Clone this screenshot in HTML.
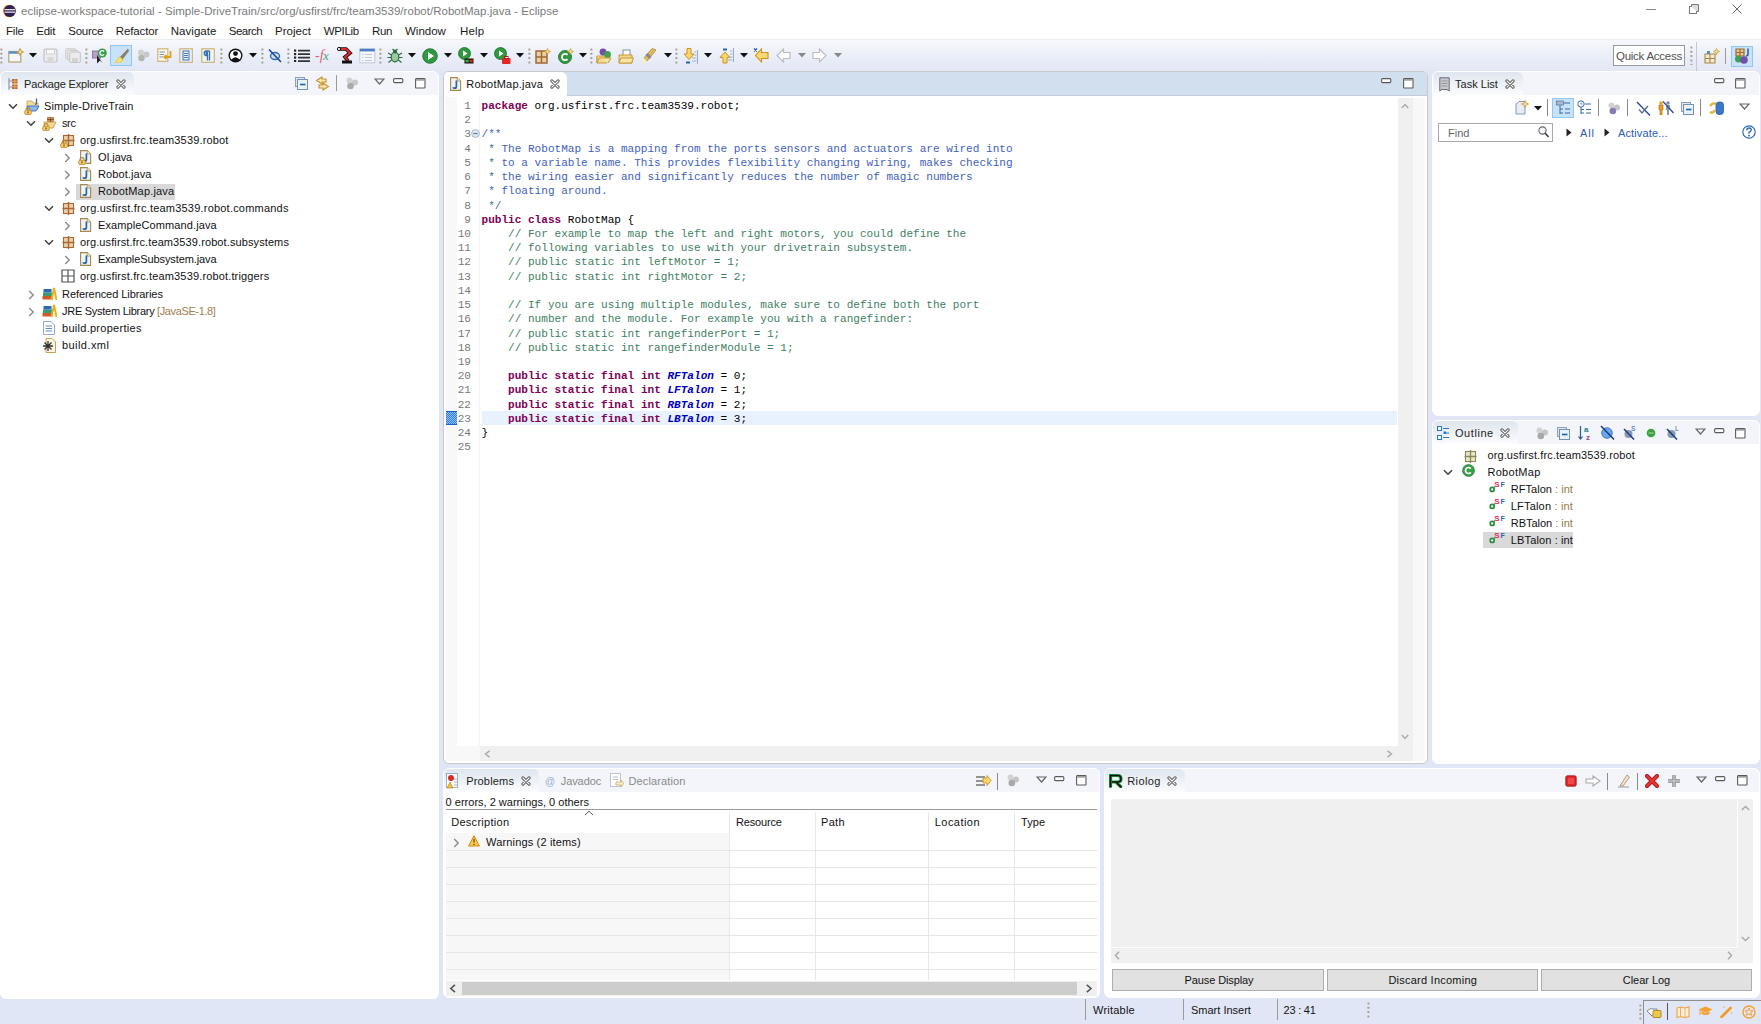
<!DOCTYPE html>
<html><head><meta charset="utf-8"><style>
*{margin:0;padding:0;box-sizing:border-box}
html,body{width:1761px;height:1024px;overflow:hidden}
body{position:relative;background:#E1E6F6;font-family:"Liberation Sans",sans-serif;font-size:11px;color:#000}
.a{position:absolute}
.t{position:absolute;white-space:pre;line-height:1}
.m{position:absolute;white-space:pre;line-height:1;font-family:"Liberation Mono",monospace}
</style></head><body>
<div class="a" style="left:0px;top:0px;width:1761px;height:40px;background:#fff"></div>
<svg class="a" style="left:2px;top:4px" width="15" height="14" viewBox="0 0 15 14"><circle cx="7.3" cy="7" r="6.3" fill="#f7941e"/><circle cx="7.8" cy="7" r="6" fill="#2c2255"/><rect x="2.5" y="5" width="10.5" height="1.3" fill="#e6e0f0"/><rect x="2.5" y="7.5" width="10.5" height="1.3" fill="#e6e0f0"/></svg>
<div class="t" style="left:21px;top:6.00px;font-size:11.5px;color:#7a7a7a;letter-spacing:0.028px;">eclipse-workspace-tutorial - Simple-DriveTrain/src/org/usfirst/frc/team3539/robot/RobotMap.java - Eclipse</div>
<div class="a" style="left:1646px;top:9px;width:10px;height:1.4px;background:#8a8a8a"></div>
<svg class="a" style="left:1689px;top:4px" width="10" height="10" viewBox="0 0 10 10"><rect x="0.5" y="2.5" width="7" height="7" fill="none" stroke="#777"/><path d="M2.5 2.5 V0.5 H9.5 V7.5 H7.5" fill="#ddd" stroke="#777"/></svg>
<svg class="a" style="left:1732px;top:4px" width="10" height="10" viewBox="0 0 10 10"><path d="M0.5 0.5 L9.5 9.5 M9.5 0.5 L0.5 9.5" stroke="#666" stroke-width="1"/></svg>
<div class="t" style="left:6px;top:26.00px;font-size:11.5px;color:#1a1a1a;letter-spacing:-0.210px;">File</div>
<div class="t" style="left:36.25px;top:26.00px;font-size:11.5px;color:#1a1a1a;letter-spacing:-0.222px;">Edit</div>
<div class="t" style="left:68.25px;top:26.00px;font-size:11.5px;color:#1a1a1a;letter-spacing:-0.258px;">Source</div>
<div class="t" style="left:115.75px;top:26.00px;font-size:11.5px;color:#1a1a1a;letter-spacing:-0.116px;">Refactor</div>
<div class="t" style="left:170.75px;top:26.00px;font-size:11.5px;color:#1a1a1a;letter-spacing:0.037px;">Navigate</div>
<div class="t" style="left:228.75px;top:26.00px;font-size:11.5px;color:#1a1a1a;letter-spacing:-0.508px;">Search</div>
<div class="t" style="left:275px;top:26.00px;font-size:11.5px;color:#1a1a1a;letter-spacing:0.018px;">Project</div>
<div class="t" style="left:323.75px;top:26.00px;font-size:11.5px;color:#1a1a1a;letter-spacing:-0.333px;">WPILib</div>
<div class="t" style="left:372px;top:26.00px;font-size:11.5px;color:#1a1a1a;letter-spacing:-0.349px;">Run</div>
<div class="t" style="left:405px;top:26.00px;font-size:11.5px;color:#1a1a1a;">Window</div>
<div class="t" style="left:460px;top:26.00px;font-size:11.5px;color:#1a1a1a;letter-spacing:0.166px;">Help</div>
<div class="a" style="left:0px;top:39px;width:1761px;height:1px;background:#ececec"></div>
<div class="a" style="left:0px;top:40px;width:1761px;height:31px;background:linear-gradient(#f7f8fc,#e9edf8 60%,#e3e7f5)"></div>
<svg class="a" style="left:0px;top:47px" width="3" height="17" viewBox="0 0 3 17"><rect x="0.4" y="1.5" width="2" height="2" rx="0.5" fill="#a8a090"/><rect x="0.4" y="5.8" width="2" height="2" rx="0.5" fill="#a8a090"/><rect x="0.4" y="10.1" width="2" height="2" rx="0.5" fill="#a8a090"/><rect x="0.4" y="14.4" width="2" height="2" rx="0.5" fill="#a8a090"/></svg>
<svg class="a" style="left:8px;top:48px" width="16" height="15" viewBox="0 0 16 15"><rect x="0.8" y="3.5" width="12" height="10.5" fill="#f4f8fc" stroke="#b9a070" stroke-width="1.2"/><rect x="1" y="3.5" width="11.5" height="2.2" fill="#4a8fd0"/><path d="M12 0.5 L13 3 L15.5 4 L13 5 L12 7.5 L11 5 L8.5 4 L11 3Z" fill="#f8e08a" stroke="#c09030" stroke-width="0.8"/></svg>
<svg class="a" style="left:29px;top:53px" width="8" height="5" viewBox="0 0 8 5"><path d="M0 0 H8 L4 4.5Z" fill="#111"/></svg>
<svg class="a" style="left:43px;top:48px" width="15" height="15" viewBox="0 0 15 15"><rect x="1" y="1" width="13" height="13" rx="1.5" fill="#ececec" stroke="#c4c4c4" stroke-width="1.2"/><rect x="3.5" y="1.5" width="8" height="4.5" fill="#fafafa" stroke="#c8c8c8" stroke-width="0.8"/><rect x="4.5" y="9" width="6" height="5" fill="#d8d8d8"/></svg>
<svg class="a" style="left:65px;top:48px" width="16" height="15" viewBox="0 0 16 15"><rect x="0.8" y="0.8" width="10" height="10" rx="1" fill="#eee" stroke="#c8c8c8"/><rect x="2.8" y="2.4" width="10" height="10" rx="1" fill="#eee" stroke="#c8c8c8"/><rect x="4.8" y="4" width="10.5" height="10.5" rx="1" fill="#ececec" stroke="#c4c4c4"/><rect x="7" y="10" width="6" height="4" fill="#d4d4d4"/></svg>
<svg class="a" style="left:85px;top:47px" width="3" height="17" viewBox="0 0 3 17"><rect x="0.4" y="1.5" width="2" height="2" rx="0.5" fill="#a8a090"/><rect x="0.4" y="5.8" width="2" height="2" rx="0.5" fill="#a8a090"/><rect x="0.4" y="10.1" width="2" height="2" rx="0.5" fill="#a8a090"/><rect x="0.4" y="14.4" width="2" height="2" rx="0.5" fill="#a8a090"/></svg>
<svg class="a" style="left:92px;top:48px" width="15" height="16" viewBox="0 0 15 16"><rect x="0.5" y="3" width="8" height="7" fill="#b8a0c8" stroke="#7a6890" stroke-width="0.8"/><path d="M5 7 V15.5 L8 12.5 L10.5 15 Z" fill="#222"/><circle cx="10.2" cy="5" r="4.6" fill="#3aa04a"/><path d="M12 3.6 A2.3 2.3 0 1 0 12 6.4" fill="none" stroke="#fff" stroke-width="1.3"/></svg>
<div class="a" style="left:110px;top:45px;width:22px;height:21px;background:#c8e2f8;border:1px solid #92c6f4"></div>
<svg class="a" style="left:114px;top:48px" width="15" height="15" viewBox="0 0 15 15"><path d="M14 0.5 L6 9 L8.5 11.5 L15 3Z" fill="#8a8070"/><path d="M5.5 8.5 L9 12 L6 15 L1 15 Z" fill="#f5e070" stroke="#d8b830" stroke-width="0.6"/></svg>
<svg class="a" style="left:137px;top:49px" width="13" height="13" viewBox="0 0 13 13"><circle cx="4" cy="3.5" r="3" fill="#cfcfcf"/><circle cx="9.5" cy="5.5" r="3" fill="#c8c8c8"/><circle cx="4.5" cy="9" r="3.2" fill="#b4b4b4"/></svg>
<svg class="a" style="left:157px;top:48px" width="16" height="15" viewBox="0 0 16 15"><rect x="0.8" y="0.8" width="10" height="12.5" fill="#fbf6e6" stroke="#c8b070" stroke-width="1.1"/><path d="M2.5 4 H8 M2.5 6.5 H7 M2.5 9 H6" stroke="#6a8ab0" stroke-width="0.9"/><path d="M13.5 3 V9 H7.5 M9.5 7 L7.3 9 L9.5 11" fill="none" stroke="#e0a020" stroke-width="1.8"/></svg>
<svg class="a" style="left:179px;top:48px" width="14" height="15" viewBox="0 0 14 15"><rect x="0.8" y="0.8" width="12.5" height="13.5" fill="#eef2f8" stroke="#c8b070" stroke-width="1.1"/><rect x="4" y="3" width="6" height="9" fill="none" stroke="#3a70c0" stroke-width="1"/><path d="M5 5.5 H9 M5 7.5 H9 M5 9.5 H9" stroke="#3a70c0" stroke-width="0.9"/></svg>
<svg class="a" style="left:201px;top:48px" width="14" height="15" viewBox="0 0 14 15"><rect x="0.8" y="0.8" width="12.5" height="13.5" fill="#f4f4ec" stroke="#c8b070" stroke-width="1.1"/><path d="M8.5 3 H5.5 A2.3 2.3 0 0 0 5.5 7.6 H6.5 V12.5 M8.5 3 V12.5" fill="none" stroke="#2f6fb8" stroke-width="1.3"/><path d="M4.5 3.5 h2.5 v3.5 h-2.5z" fill="#2f6fb8"/></svg>
<svg class="a" style="left:220px;top:47px" width="3" height="17" viewBox="0 0 3 17"><rect x="0.4" y="1.5" width="2" height="2" rx="0.5" fill="#a8a090"/><rect x="0.4" y="5.8" width="2" height="2" rx="0.5" fill="#a8a090"/><rect x="0.4" y="10.1" width="2" height="2" rx="0.5" fill="#a8a090"/><rect x="0.4" y="14.4" width="2" height="2" rx="0.5" fill="#a8a090"/></svg>
<svg class="a" style="left:228px;top:48px" width="15" height="15" viewBox="0 0 15 15"><circle cx="7.5" cy="7.5" r="7" fill="#111"/><circle cx="7.5" cy="7.5" r="5.6" fill="#fff"/><circle cx="7.5" cy="5.6" r="2.4" fill="#111"/><path d="M3 12 Q7.5 6.5 12 12 Q7.5 15 3 12Z" fill="#111"/></svg>
<svg class="a" style="left:249px;top:53px" width="8" height="5" viewBox="0 0 8 5"><path d="M0 0 H8 L4 4.5Z" fill="#111"/></svg>
<svg class="a" style="left:261px;top:47px" width="3" height="17" viewBox="0 0 3 17"><rect x="0.4" y="1.5" width="2" height="2" rx="0.5" fill="#a8a090"/><rect x="0.4" y="5.8" width="2" height="2" rx="0.5" fill="#a8a090"/><rect x="0.4" y="10.1" width="2" height="2" rx="0.5" fill="#a8a090"/><rect x="0.4" y="14.4" width="2" height="2" rx="0.5" fill="#a8a090"/></svg>
<svg class="a" style="left:268px;top:48px" width="14" height="15" viewBox="0 0 14 15"><ellipse cx="7" cy="8" rx="4.5" ry="3.5" fill="#cfe0f4" stroke="#3a68b0" stroke-width="1.4"/><path d="M1 1.5 L13 14" stroke="#1a4aa0" stroke-width="1.6"/></svg>
<svg class="a" style="left:287px;top:47px" width="3" height="17" viewBox="0 0 3 17"><rect x="0.4" y="1.5" width="2" height="2" rx="0.5" fill="#a8a090"/><rect x="0.4" y="5.8" width="2" height="2" rx="0.5" fill="#a8a090"/><rect x="0.4" y="10.1" width="2" height="2" rx="0.5" fill="#a8a090"/><rect x="0.4" y="14.4" width="2" height="2" rx="0.5" fill="#a8a090"/></svg>
<svg class="a" style="left:294px;top:49px" width="16" height="13" viewBox="0 0 16 13"><rect x="0" y="0.5" width="2.2" height="2.2" fill="#222"/><rect x="0" y="4" width="2.2" height="2.2" fill="#222"/><rect x="0" y="7.5" width="2.2" height="2.2" fill="#222"/><rect x="0" y="11" width="2.2" height="2.2" fill="#222"/><path d="M4 1.6 H16 M4 5.1 H16 M4 8.6 H16 M4 12.1 H16" stroke="#333" stroke-width="1.6"/></svg>
<svg class="a" style="left:315px;top:48px" width="16" height="15" viewBox="0 0 16 15"><text x="0" y="12" font-family="Liberation Serif" font-style="italic" font-size="14" fill="#e06080">-f</text><text x="8" y="12" font-family="Liberation Serif" font-style="italic" font-size="13" fill="#50a070">x</text></svg>
<svg class="a" style="left:337px;top:47px" width="16" height="17" viewBox="0 0 16 17"><path d="M1 2 H9 L13 6 L8 10 L11 14" fill="none" stroke="#111" stroke-width="3.6"/><path d="M1 2 H9 L13 6 L8 10 L11 14" fill="none" stroke="#e02828" stroke-width="2"/><rect x="5" y="13.5" width="10" height="3" fill="#111"/><circle cx="2" cy="2" r="1.6" fill="#fff" stroke="#111"/></svg>
<svg class="a" style="left:359px;top:48px" width="17" height="16" viewBox="0 0 17 16"><rect x="0.8" y="0.8" width="15" height="14" fill="#f6f8fb" stroke="#c0c8d8" stroke-width="1"/><rect x="0.8" y="0.8" width="15" height="2.6" fill="#4a80c8"/><path d="M3 6.5 H4.5 M6 6.5 H13 M3 9.5 H4.5 M6 9.5 H13 M3 12.5 H4.5 M6 12.5 H13" stroke="#c0c8d4" stroke-width="1"/></svg>
<svg class="a" style="left:379px;top:47px" width="3" height="17" viewBox="0 0 3 17"><rect x="0.4" y="1.5" width="2" height="2" rx="0.5" fill="#a8a090"/><rect x="0.4" y="5.8" width="2" height="2" rx="0.5" fill="#a8a090"/><rect x="0.4" y="10.1" width="2" height="2" rx="0.5" fill="#a8a090"/><rect x="0.4" y="14.4" width="2" height="2" rx="0.5" fill="#a8a090"/></svg>
<svg class="a" style="left:387px;top:48px" width="16" height="16" viewBox="0 0 16 16"><ellipse cx="8" cy="9" rx="3.8" ry="4.8" fill="#9cc8a0" stroke="#2a6a40" stroke-width="1.2"/><circle cx="8" cy="3.5" r="2" fill="#2a6a40"/><path d="M1 5 L4.5 7 M15 5 L11.5 7 M0.5 9.5 H4 M15.5 9.5 H12 M1.5 14.5 L4.5 12 M14.5 14.5 L11.5 12 M5.5 1 L7 2.5 M10.5 1 L9 2.5" stroke="#2a6a40" stroke-width="1.1"/></svg>
<svg class="a" style="left:408px;top:53px" width="8" height="5" viewBox="0 0 8 5"><path d="M0 0 H8 L4 4.5Z" fill="#111"/></svg>
<svg class="a" style="left:422px;top:48px" width="16" height="16" viewBox="0 0 16 16"><circle cx="8" cy="8" r="7.3" fill="#2d9a3e" stroke="#1b6b2a" stroke-width="0.8"/><path d="M6 4 L12 8 L6 12Z" fill="#fff"/></svg>
<svg class="a" style="left:444px;top:53px" width="8" height="5" viewBox="0 0 8 5"><path d="M0 0 H8 L4 4.5Z" fill="#111"/></svg>
<svg class="a" style="left:458px;top:47px" width="16" height="17" viewBox="0 0 16 17"><circle cx="6.5" cy="6.5" r="6" fill="#2d9a3e" stroke="#1b6b2a" stroke-width="0.8"/><path d="M5 3.5 L9.5 6.5 L5 9.5Z" fill="#fff"/><rect x="6.5" y="11.5" width="9" height="5" fill="#111"/><rect x="7.5" y="12.7" width="3.2" height="2.6" fill="#20c040"/><rect x="11.5" y="12.7" width="3.2" height="2.6" fill="#e02020"/></svg>
<svg class="a" style="left:480px;top:53px" width="8" height="5" viewBox="0 0 8 5"><path d="M0 0 H8 L4 4.5Z" fill="#111"/></svg>
<svg class="a" style="left:494px;top:47px" width="17" height="17" viewBox="0 0 17 17"><circle cx="6.5" cy="6.5" r="6" fill="#2d9a3e" stroke="#1b6b2a" stroke-width="0.8"/><path d="M5 3.5 L9.5 6.5 L5 9.5Z" fill="#fff"/><rect x="8" y="11" width="8.5" height="6" rx="1" fill="#e02828"/><rect x="10.5" y="9.5" width="3.5" height="2" fill="none" stroke="#b01818" stroke-width="1"/></svg>
<svg class="a" style="left:516px;top:53px" width="8" height="5" viewBox="0 0 8 5"><path d="M0 0 H8 L4 4.5Z" fill="#111"/></svg>
<svg class="a" style="left:528px;top:47px" width="3" height="17" viewBox="0 0 3 17"><rect x="0.4" y="1.5" width="2" height="2" rx="0.5" fill="#a8a090"/><rect x="0.4" y="5.8" width="2" height="2" rx="0.5" fill="#a8a090"/><rect x="0.4" y="10.1" width="2" height="2" rx="0.5" fill="#a8a090"/><rect x="0.4" y="14.4" width="2" height="2" rx="0.5" fill="#a8a090"/></svg>
<svg class="a" style="left:535px;top:48px" width="16" height="16" viewBox="0 0 16 16"><rect x="1" y="3" width="11" height="12" fill="#e8d0a0"/><path d="M1 9 H12 M6.5 3 V15 M1 3 H12 V15 H1Z" stroke="#a06838" stroke-width="1.5" fill="none"/><path d="M12.5 0.5 L13.4 2.6 L15.5 3.5 L13.4 4.4 L12.5 6.5 L11.6 4.4 L9.5 3.5 L11.6 2.6Z" fill="#f8e08a" stroke="#c09030" stroke-width="0.7"/></svg>
<svg class="a" style="left:558px;top:48px" width="16" height="16" viewBox="0 0 16 16"><circle cx="7" cy="9" r="6.5" fill="#2d9a3e" stroke="#1b6b2a" stroke-width="0.8"/><path d="M9.5 6.8 A3.2 3.2 0 1 0 9.5 11.2" fill="none" stroke="#fff" stroke-width="1.8"/><path d="M12.5 0.5 L13.4 2.6 L15.5 3.5 L13.4 4.4 L12.5 6.5 L11.6 4.4 L9.5 3.5 L11.6 2.6Z" fill="#f8e08a" stroke="#c09030" stroke-width="0.7"/></svg>
<svg class="a" style="left:579px;top:53px" width="8" height="5" viewBox="0 0 8 5"><path d="M0 0 H8 L4 4.5Z" fill="#111"/></svg>
<svg class="a" style="left:590px;top:47px" width="3" height="17" viewBox="0 0 3 17"><rect x="0.4" y="1.5" width="2" height="2" rx="0.5" fill="#a8a090"/><rect x="0.4" y="5.8" width="2" height="2" rx="0.5" fill="#a8a090"/><rect x="0.4" y="10.1" width="2" height="2" rx="0.5" fill="#a8a090"/><rect x="0.4" y="14.4" width="2" height="2" rx="0.5" fill="#a8a090"/></svg>
<svg class="a" style="left:596px;top:47px" width="17" height="17" viewBox="0 0 17 17"><path d="M1 9 H14 L11 16 H1Z" fill="#f4d890" stroke="#c89838" stroke-width="1"/><circle cx="7" cy="5" r="3.4" fill="#7050a8"/><circle cx="11.5" cy="7.5" r="3.4" fill="#40a050"/><path d="M1 9 V16 L3 11 H15 L12 16" fill="#f8e4a8" stroke="#c89838" stroke-width="1"/></svg>
<svg class="a" style="left:618px;top:48px" width="16" height="16" viewBox="0 0 16 16"><rect x="5" y="2" width="7" height="6" fill="#fff" stroke="#7a90b0" stroke-width="1"/><path d="M1 7 H14 V15 H1Z" fill="#f4d890" stroke="#c89838" stroke-width="1"/><path d="M1 15 L3 10 H15.5 L13.5 15Z" fill="#f8e4a8" stroke="#c89838" stroke-width="1"/></svg>
<svg class="a" style="left:641px;top:48px" width="17" height="16" viewBox="0 0 17 16"><path d="M15 2 L11 0.5 L3 10 L6 13 Z" fill="#e0b860" stroke="#b08830" stroke-width="0.8"/><path d="M5.5 6 L9.5 10" stroke="#888" stroke-width="3"/><path d="M1 15.5 L3 10 L6 13Z" fill="#f8f0b0"/></svg>
<svg class="a" style="left:664px;top:53px" width="8" height="5" viewBox="0 0 8 5"><path d="M0 0 H8 L4 4.5Z" fill="#111"/></svg>
<svg class="a" style="left:675px;top:47px" width="3" height="17" viewBox="0 0 3 17"><rect x="0.4" y="1.5" width="2" height="2" rx="0.5" fill="#a8a090"/><rect x="0.4" y="5.8" width="2" height="2" rx="0.5" fill="#a8a090"/><rect x="0.4" y="10.1" width="2" height="2" rx="0.5" fill="#a8a090"/><rect x="0.4" y="14.4" width="2" height="2" rx="0.5" fill="#a8a090"/></svg>
<svg class="a" style="left:683px;top:48px" width="15" height="16" viewBox="0 0 15 16"><path d="M4 0.5 H8 V6 H11 L6 11.5 L1 6 H4Z" fill="#f8d870" stroke="#d09020" stroke-width="1"/><path d="M11 4 H13.5 M11 7 H13.5 M9 10 H13.5 M9 13 H13.5" stroke="#9aaccc" stroke-width="0.9"/><path d="M14.5 2 V16" stroke="#9aaccc" stroke-width="1"/><rect x="3" y="13.5" width="4" height="2" fill="#3060b0"/></svg>
<svg class="a" style="left:704px;top:53px" width="8" height="5" viewBox="0 0 8 5"><path d="M0 0 H8 L4 4.5Z" fill="#111"/></svg>
<svg class="a" style="left:719px;top:47px" width="15" height="17" viewBox="0 0 15 17"><path d="M4 16 H8 V10.5 H11 L6 5 L1 10.5 H4Z" fill="#f8d870" stroke="#d09020" stroke-width="1"/><path d="M11 4 H13.5 M11 7 H13.5 M9 10 H13.5 M9 13 H13.5" stroke="#9aaccc" stroke-width="0.9"/><path d="M14.5 1 V15" stroke="#9aaccc" stroke-width="1"/><rect x="4" y="1.5" width="4" height="2" fill="#3060b0"/></svg>
<svg class="a" style="left:740px;top:53px" width="8" height="5" viewBox="0 0 8 5"><path d="M0 0 H8 L4 4.5Z" fill="#111"/></svg>
<svg class="a" style="left:753px;top:48px" width="16" height="15" viewBox="0 0 16 15"><path d="M15 4.5 V10.5 H8.5 V14 L2.5 7.5 L8.5 1 V4.5Z" fill="#f8d870" stroke="#d09020" stroke-width="1.1"/><path d="M1 0.5 L4 3.5 M4 0.5 L1 3.5" stroke="#2050a0" stroke-width="1.1"/></svg>
<svg class="a" style="left:776px;top:48px" width="15" height="15" viewBox="0 0 15 15"><path d="M14 4.5 V10.5 H7.5 V14 L1 7.5 L7.5 1 V4.5Z" fill="#fff" stroke="#bdbdbd" stroke-width="1.2"/></svg>
<svg class="a" style="left:798px;top:53px" width="8" height="5" viewBox="0 0 8 5"><path d="M0 0 H8 L4 4.5Z" fill="#888"/></svg>
<svg class="a" style="left:812px;top:48px" width="15" height="15" viewBox="0 0 15 15"><path d="M1 4.5 V10.5 H7.5 V14 L14 7.5 L7.5 1 V4.5Z" fill="#fff" stroke="#bdbdbd" stroke-width="1.2"/></svg>
<svg class="a" style="left:834px;top:53px" width="8" height="5" viewBox="0 0 8 5"><path d="M0 0 H8 L4 4.5Z" fill="#888"/></svg>
<div class="a" style="left:1613px;top:45px;width:72px;height:21px;background:#fff;border:1px solid #9a9a9a"></div>
<div class="t" style="left:1616px;top:51.00px;font-size:11.5px;color:#505050;letter-spacing:-0.261px;">Quick Access</div>
<svg class="a" style="left:1690px;top:45px" width="3" height="20" viewBox="0 0 3 20"><rect x="0.4" y="1.5" width="2" height="2" rx="0.5" fill="#a8a090"/><rect x="0.4" y="5.8" width="2" height="2" rx="0.5" fill="#a8a090"/><rect x="0.4" y="10.1" width="2" height="2" rx="0.5" fill="#a8a090"/><rect x="0.4" y="14.4" width="2" height="2" rx="0.5" fill="#a8a090"/><rect x="0.4" y="18.7" width="2" height="2" rx="0.5" fill="#a8a090"/></svg>
<div class="a" style="left:1696px;top:42px;width:1px;height:29px;background:#c4c8d4"></div>
<svg class="a" style="left:1704px;top:48px" width="16" height="16" viewBox="0 0 16 16"><rect x="1" y="6" width="10" height="9" fill="#f4ead0"/><path d="M1 10.5 H11 M6 6 V15 M1 6 H11 V15 H1Z" stroke="#a8884a" stroke-width="1.1" fill="none"/><rect x="3" y="3" width="3" height="3" fill="#5a8ad0"/><path d="M12.5 0.5 L13.4 2.6 L15.5 3.5 L13.4 4.4 L12.5 6.5 L11.6 4.4 L9.5 3.5 L11.6 2.6Z" fill="#f8e08a" stroke="#c09030" stroke-width="0.7"/></svg>
<div class="a" style="left:1725px;top:48px;width:1px;height:16px;background:#999"></div>
<div class="a" style="left:1731px;top:46px;width:22px;height:21px;background:#c8e2f8;border:1px solid #92c6f4"></div>
<svg class="a" style="left:1734px;top:48px" width="17" height="16" viewBox="0 0 17 16"><rect x="2" y="1" width="8" height="7" fill="#e6c890"/><path d="M2 4.5 H10 M6 1 V8 M2 1 H10 V8 H2Z" stroke="#a06838" stroke-width="1.2" fill="none"/><circle cx="4.5" cy="11" r="3.5" fill="#40a050"/><circle cx="10" cy="12" r="3.8" fill="#7050a8"/><path d="M14 0.5 V6 Q14 8 12 8" fill="none" stroke="#2a5aa8" stroke-width="1.5"/></svg>
<div class="a" style="left:0px;top:71px;width:439px;height:928px;background:#fff;border:1px solid #ffffff;border-radius:6px;overflow:hidden"><div class="a" style="left:0;top:0;width:437px;height:23px;background:#f3f5fa;border-bottom:1px solid #f3f5fa"></div><div class="a" style="left:0;top:0;width:133px;height:23px;background:linear-gradient(#dfe6ef,#fbfcfd);border-top-right-radius:6px"></div></div>
<svg class="a" style="left:8px;top:78px" width="10" height="12" viewBox="0 0 10 12"><path d="M1 0 V12 M1 3 H4 M1 9 H4" stroke="#8898b0" stroke-width="1.2"/><rect x="4" y="1" width="5.5" height="4.5" fill="#c06a28"/><rect x="4" y="6.5" width="5.5" height="4.5" fill="#c06a28"/><path d="M4 3.2 H9.5 M6.8 1 V5.5 M4 8.7 H9.5 M6.8 6.5 V11" stroke="#f0d0a0" stroke-width="0.6"/></svg>
<div class="t" style="left:24px;top:79.00px;font-size:11px;color:#222;letter-spacing:-0.162px;">Package Explorer</div>
<svg class="a" style="left:116px;top:79px" width="10" height="10" viewBox="0 0 10 10"><path d="M1.9 1.9 L8.1 8.1 M8.1 1.9 L1.9 8.1" stroke="#555" stroke-width="3" stroke-linecap="round"/><path d="M1.9 1.9 L8.1 8.1 M8.1 1.9 L1.9 8.1" stroke="#fff" stroke-width="1.3" stroke-linecap="round"/></svg>
<svg class="a" style="left:295px;top:77px" width="13" height="13" viewBox="0 0 13 13"><rect x="0.5" y="0.5" width="9" height="9" fill="#dfe8f0" stroke="#8ca0b8"/><rect x="2.5" y="2.5" width="10" height="10" fill="#e8f2f8" stroke="#7890b0"/><path d="M5 7.5 H10.5" stroke="#2060a8" stroke-width="1.6"/></svg>
<svg class="a" style="left:315px;top:76px" width="15" height="15" viewBox="0 0 15 15"><path d="M7 1 L1.5 4.5 L7 8 V6 H11 V3 H7Z" fill="#f8e8b0" stroke="#c89030" stroke-width="1.1"/><path d="M8 7 L13.5 10.5 L8 14 V12 H4 V9 H8Z" fill="#f8e8b0" stroke="#c89030" stroke-width="1.1"/></svg>
<div class="a" style="left:336px;top:75px;width:1px;height:16px;background:#999"></div>
<svg class="a" style="left:346px;top:77px" width="13" height="13" viewBox="0 0 13 13"><circle cx="3.5" cy="3.5" r="3" fill="#d2d2d2"/><circle cx="9" cy="5.5" r="3" fill="#c8c8c8"/><circle cx="4.5" cy="9" r="3.3" fill="#aaa"/></svg>
<svg class="a" style="left:374px;top:78px" width="11" height="7" viewBox="0 0 11 7"><path d="M1 1 H10 L5.5 6Z" fill="none" stroke="#666" stroke-width="1.2"/></svg>
<svg class="a" style="left:393px;top:78px" width="11" height="6" viewBox="0 0 11 6"><rect x="0.6" y="0.6" width="9.2" height="4" fill="#fff" stroke="#5a5a5a" stroke-width="1.1" rx="1"/></svg>
<svg class="a" style="left:415px;top:78px" width="11" height="11" viewBox="0 0 11 11"><rect x="0.6" y="0.6" width="9.4" height="9.4" fill="#fff" stroke="#5a5a5a" stroke-width="1.1" rx="0.6"/><rect x="1.1" y="1.1" width="8.4" height="1.6" fill="#9a9a9a"/></svg>
<svg class="a" style="left:8px;top:103px" width="10" height="7" viewBox="0 0 10 7"><path d="M1 1.2 L5 5.2 L9 1.2" fill="none" stroke="#404040" stroke-width="1.5"/></svg>
<svg class="a" style="left:24px;top:98px" width="16" height="16" viewBox="0 0 16 16"><path d="M3 3 H8 L9 5 H14 V11 H3Z" fill="#f4dca0" stroke="#c8a050" stroke-width="0.8"/><path d="M3 8 H15 L12 13 H4Z" fill="#8cb8f0" stroke="#3a70c8" stroke-width="0.9"/><path d="M12.5 0.5 V5 Q12.5 6.5 11 6.5" fill="none" stroke="#2a5aa8" stroke-width="1.2"/></svg>
<svg class="a" style="left:24px;top:107px" width="8" height="8" viewBox="0 0 8 8"><path d="M2 3.5 V2.5 Q2 0.6 4 0.6 Q6 0.6 6 2.5 V3.5" fill="none" stroke="#c08a30" stroke-width="1.1"/><rect x="0.7" y="3.3" width="6.6" height="4.3" rx="1.2" fill="#f6cc6a" stroke="#c8902a" stroke-width="0.9"/><rect x="3.4" y="4.4" width="1.2" height="2" fill="#6a5020"/></svg>
<div class="t" style="left:44px;top:101.00px;font-size:11px;color:#111;letter-spacing:0.112px;">Simple-DriveTrain</div>
<svg class="a" style="left:26px;top:120px" width="10" height="7" viewBox="0 0 10 7"><path d="M1 1.2 L5 5.2 L9 1.2" fill="none" stroke="#404040" stroke-width="1.5"/></svg>
<svg class="a" style="left:42px;top:116px" width="16" height="14" viewBox="0 0 16 14"><path d="M2 6 H14 L11 12 H3Z" fill="#f2d898" stroke="#c89848" stroke-width="0.8"/><rect x="5" y="1" width="7" height="5" fill="#c0905a"/><path d="M5 3.5 H12 M8.5 1 V6" stroke="#804820" stroke-width="0.8"/></svg>
<svg class="a" style="left:42px;top:123px" width="8" height="8" viewBox="0 0 8 8"><path d="M2 3.5 V2.5 Q2 0.6 4 0.6 Q6 0.6 6 2.5 V3.5" fill="none" stroke="#c08a30" stroke-width="1.1"/><rect x="0.7" y="3.3" width="6.6" height="4.3" rx="1.2" fill="#f6cc6a" stroke="#c8902a" stroke-width="0.9"/><rect x="3.4" y="4.4" width="1.2" height="2" fill="#6a5020"/></svg>
<div class="t" style="left:62px;top:118.00px;font-size:11px;color:#111;letter-spacing:-0.382px;">src</div>
<svg class="a" style="left:44px;top:137px" width="10" height="7" viewBox="0 0 10 7"><path d="M1 1.2 L5 5.2 L9 1.2" fill="none" stroke="#404040" stroke-width="1.5"/></svg>
<svg class="a" style="left:62px;top:134px" width="13" height="13" viewBox="0 0 13 13"><rect x="1.5" y="1.5" width="10" height="10" fill="#ead2a8" stroke="#a86838" stroke-width="1.1"/><path d="M0.5 6.5 H12.5 M6.5 0 V13" stroke="#a86838" stroke-width="1.4" fill="none"/></svg>
<svg class="a" style="left:60px;top:140px" width="8" height="8" viewBox="0 0 8 8"><path d="M2 3.5 V2.5 Q2 0.6 4 0.6 Q6 0.6 6 2.5 V3.5" fill="none" stroke="#c08a30" stroke-width="1.1"/><rect x="0.7" y="3.3" width="6.6" height="4.3" rx="1.2" fill="#f6cc6a" stroke="#c8902a" stroke-width="0.9"/><rect x="3.4" y="4.4" width="1.2" height="2" fill="#6a5020"/></svg>
<div class="t" style="left:80px;top:135.00px;font-size:11px;color:#111;letter-spacing:0.163px;">org.usfirst.frc.team3539.robot</div>
<svg class="a" style="left:64px;top:153px" width="7" height="10" viewBox="0 0 7 10"><path d="M1.2 1 L5.2 5 L1.2 9" fill="none" stroke="#8a8a8a" stroke-width="1.4"/></svg>
<svg class="a" style="left:80px;top:150px" width="12" height="14" viewBox="0 0 12 14"><path d="M0.6 0.6 H7.2 L10.6 4 V13.4 H0.6Z" fill="#edf3fa" stroke="#a8884a" stroke-width="1.1"/><path d="M7.2 0.6 V4 H10.6" fill="#f8f0d8" stroke="#a8884a" stroke-width="0.8"/><path d="M6.4 3.6 V9.2 Q6.4 11.2 4.5 11.2 Q3.4 11.2 2.9 10.4" fill="none" stroke="#2a64a8" stroke-width="1.7"/></svg>
<svg class="a" style="left:78px;top:157px" width="8" height="8" viewBox="0 0 8 8"><path d="M2 3.5 V2.5 Q2 0.6 4 0.6 Q6 0.6 6 2.5 V3.5" fill="none" stroke="#c08a30" stroke-width="1.1"/><rect x="0.7" y="3.3" width="6.6" height="4.3" rx="1.2" fill="#f6cc6a" stroke="#c8902a" stroke-width="0.9"/><rect x="3.4" y="4.4" width="1.2" height="2" fill="#6a5020"/></svg>
<div class="t" style="left:98px;top:152.00px;font-size:11px;color:#111;letter-spacing:-0.116px;">OI.java</div>
<svg class="a" style="left:64px;top:170px" width="7" height="10" viewBox="0 0 7 10"><path d="M1.2 1 L5.2 5 L1.2 9" fill="none" stroke="#8a8a8a" stroke-width="1.4"/></svg>
<svg class="a" style="left:80px;top:167px" width="12" height="14" viewBox="0 0 12 14"><path d="M0.6 0.6 H7.2 L10.6 4 V13.4 H0.6Z" fill="#edf3fa" stroke="#a8884a" stroke-width="1.1"/><path d="M7.2 0.6 V4 H10.6" fill="#f8f0d8" stroke="#a8884a" stroke-width="0.8"/><path d="M6.4 3.6 V9.2 Q6.4 11.2 4.5 11.2 Q3.4 11.2 2.9 10.4" fill="none" stroke="#2a64a8" stroke-width="1.7"/></svg>
<div class="t" style="left:98px;top:169.00px;font-size:11px;color:#111;letter-spacing:0.090px;">Robot.java</div>
<div class="a" style="left:76px;top:184px;width:99px;height:16px;background:#d9d9d9"></div>
<svg class="a" style="left:64px;top:187px" width="7" height="10" viewBox="0 0 7 10"><path d="M1.2 1 L5.2 5 L1.2 9" fill="none" stroke="#8a8a8a" stroke-width="1.4"/></svg>
<svg class="a" style="left:80px;top:184px" width="12" height="14" viewBox="0 0 12 14"><path d="M0.6 0.6 H7.2 L10.6 4 V13.4 H0.6Z" fill="#edf3fa" stroke="#a8884a" stroke-width="1.1"/><path d="M7.2 0.6 V4 H10.6" fill="#f8f0d8" stroke="#a8884a" stroke-width="0.8"/><path d="M6.4 3.6 V9.2 Q6.4 11.2 4.5 11.2 Q3.4 11.2 2.9 10.4" fill="none" stroke="#2a64a8" stroke-width="1.7"/></svg>
<div class="t" style="left:98px;top:186.00px;font-size:11px;color:#111;letter-spacing:0.180px;">RobotMap.java</div>
<svg class="a" style="left:44px;top:205px" width="10" height="7" viewBox="0 0 10 7"><path d="M1 1.2 L5 5.2 L9 1.2" fill="none" stroke="#404040" stroke-width="1.5"/></svg>
<svg class="a" style="left:62px;top:202px" width="13" height="13" viewBox="0 0 13 13"><rect x="1.5" y="1.5" width="10" height="10" fill="#ead2a8" stroke="#a86838" stroke-width="1.1"/><path d="M0.5 6.5 H12.5 M6.5 0 V13" stroke="#a86838" stroke-width="1.4" fill="none"/></svg>
<div class="t" style="left:80px;top:203.00px;font-size:11px;color:#111;letter-spacing:0.207px;">org.usfirst.frc.team3539.robot.commands</div>
<svg class="a" style="left:64px;top:221px" width="7" height="10" viewBox="0 0 7 10"><path d="M1.2 1 L5.2 5 L1.2 9" fill="none" stroke="#8a8a8a" stroke-width="1.4"/></svg>
<svg class="a" style="left:80px;top:218px" width="12" height="14" viewBox="0 0 12 14"><path d="M0.6 0.6 H7.2 L10.6 4 V13.4 H0.6Z" fill="#edf3fa" stroke="#a8884a" stroke-width="1.1"/><path d="M7.2 0.6 V4 H10.6" fill="#f8f0d8" stroke="#a8884a" stroke-width="0.8"/><path d="M6.4 3.6 V9.2 Q6.4 11.2 4.5 11.2 Q3.4 11.2 2.9 10.4" fill="none" stroke="#2a64a8" stroke-width="1.7"/></svg>
<div class="t" style="left:98px;top:220.00px;font-size:11px;color:#111;letter-spacing:0.104px;">ExampleCommand.java</div>
<svg class="a" style="left:44px;top:239px" width="10" height="7" viewBox="0 0 10 7"><path d="M1 1.2 L5 5.2 L9 1.2" fill="none" stroke="#404040" stroke-width="1.5"/></svg>
<svg class="a" style="left:62px;top:236px" width="13" height="13" viewBox="0 0 13 13"><rect x="1.5" y="1.5" width="10" height="10" fill="#ead2a8" stroke="#a86838" stroke-width="1.1"/><path d="M0.5 6.5 H12.5 M6.5 0 V13" stroke="#a86838" stroke-width="1.4" fill="none"/></svg>
<div class="t" style="left:80px;top:237.00px;font-size:11px;color:#111;letter-spacing:0.102px;">org.usfirst.frc.team3539.robot.subsystems</div>
<svg class="a" style="left:64px;top:255px" width="7" height="10" viewBox="0 0 7 10"><path d="M1.2 1 L5.2 5 L1.2 9" fill="none" stroke="#8a8a8a" stroke-width="1.4"/></svg>
<svg class="a" style="left:80px;top:252px" width="12" height="14" viewBox="0 0 12 14"><path d="M0.6 0.6 H7.2 L10.6 4 V13.4 H0.6Z" fill="#edf3fa" stroke="#a8884a" stroke-width="1.1"/><path d="M7.2 0.6 V4 H10.6" fill="#f8f0d8" stroke="#a8884a" stroke-width="0.8"/><path d="M6.4 3.6 V9.2 Q6.4 11.2 4.5 11.2 Q3.4 11.2 2.9 10.4" fill="none" stroke="#2a64a8" stroke-width="1.7"/></svg>
<div class="t" style="left:98px;top:254.00px;font-size:11px;color:#111;letter-spacing:-0.090px;">ExampleSubsystem.java</div>
<svg class="a" style="left:61px;top:269px" width="14" height="14" viewBox="0 0 14 14"><path d="M1 7 H13 M7 1 V13 M1 1 H13 V13 H1Z" stroke="#555" stroke-width="1.2" fill="none"/></svg>
<div class="t" style="left:80px;top:271.00px;font-size:11px;color:#111;letter-spacing:0.151px;">org.usfirst.frc.team3539.robot.triggers</div>
<svg class="a" style="left:28px;top:290px" width="7" height="10" viewBox="0 0 7 10"><path d="M1.2 1 L5.2 5 L1.2 9" fill="none" stroke="#8a8a8a" stroke-width="1.4"/></svg>
<svg class="a" style="left:42px;top:287px" width="15" height="14" viewBox="0 0 15 14"><rect x="0.5" y="9" width="10" height="3.5" fill="#d05a2a"/><rect x="1" y="5.5" width="9" height="3.5" fill="#3a9a70"/><rect x="1.5" y="2" width="8" height="3.5" fill="#2a6ab0"/><path d="M9.5 13 L12 1 L14.5 13" fill="none" stroke="#e8b020" stroke-width="2"/></svg>
<div class="t" style="left:62px;top:289.00px;font-size:11px;color:#111;letter-spacing:-0.064px;">Referenced Libraries</div>
<svg class="a" style="left:28px;top:307px" width="7" height="10" viewBox="0 0 7 10"><path d="M1.2 1 L5.2 5 L1.2 9" fill="none" stroke="#8a8a8a" stroke-width="1.4"/></svg>
<svg class="a" style="left:42px;top:304px" width="15" height="14" viewBox="0 0 15 14"><rect x="0.5" y="9" width="10" height="3.5" fill="#d05a2a"/><rect x="1" y="5.5" width="9" height="3.5" fill="#3a9a70"/><rect x="1.5" y="2" width="8" height="3.5" fill="#2a6ab0"/><path d="M9.5 13 L12 1 L14.5 13" fill="none" stroke="#e8b020" stroke-width="2"/></svg>
<div class="t" style="left:62px;top:306.00px;font-size:11px;color:#111;letter-spacing:-0.267px;">JRE System Library</div>
<div class="t" style="left:157px;top:306.00px;font-size:11px;color:#a08050;letter-spacing:-0.371px;">[JavaSE-1.8]</div>
<svg class="a" style="left:43px;top:321px" width="12" height="14" viewBox="0 0 12 14"><path d="M0.5 0.5 H8 L11.5 4 V13.5 H0.5Z" fill="#fff" stroke="#9aa8c0"/><path d="M2.5 5 H9 M2.5 7.5 H9 M2.5 10 H9" stroke="#4a80c8" stroke-width="0.9"/></svg>
<div class="t" style="left:62px;top:323.00px;font-size:11px;color:#111;letter-spacing:0.279px;">build.properties</div>
<svg class="a" style="left:42px;top:338px" width="14" height="15" viewBox="0 0 14 15"><path d="M4 0.5 H10 L13.5 4 V14.5 H4Z" fill="#fdf6e0" stroke="#c8a050"/><path d="M6 3 L6 13 M1 8 H11 M2.5 4.5 L9.5 11.5 M9.5 4.5 L2.5 11.5" stroke="#333" stroke-width="1.3"/></svg>
<div class="t" style="left:62px;top:340.00px;font-size:11px;color:#111;letter-spacing:0.437px;">build.xml</div>
<div class="a" style="left:443px;top:71px;width:985px;height:693px;background:#fff;border:1px solid #c9c9c9;border-radius:6px;overflow:hidden"><div class="a" style="left:0;top:0;width:983px;height:24px;background:#d1dfee;border-bottom:1px solid #c4cad8"></div><div class="a" style="left:0;top:0;width:123px;height:24px;background:#fff;border-top-right-radius:6px"></div></div>
<svg class="a" style="left:450px;top:77px" width="12" height="14" viewBox="0 0 12 14"><path d="M0.6 0.6 H7.2 L10.6 4 V13.4 H0.6Z" fill="#edf3fa" stroke="#a8884a" stroke-width="1.1"/><path d="M7.2 0.6 V4 H10.6" fill="#f8f0d8" stroke="#a8884a" stroke-width="0.8"/><path d="M6.4 3.6 V9.2 Q6.4 11.2 4.5 11.2 Q3.4 11.2 2.9 10.4" fill="none" stroke="#2a64a8" stroke-width="1.7"/></svg>
<div class="t" style="left:466.25px;top:79.00px;font-size:11px;color:#111;letter-spacing:0.222px;">RobotMap.java</div>
<svg class="a" style="left:550px;top:79px" width="10" height="10" viewBox="0 0 10 10"><path d="M1.9 1.9 L8.1 8.1 M8.1 1.9 L1.9 8.1" stroke="#555" stroke-width="3" stroke-linecap="round"/><path d="M1.9 1.9 L8.1 8.1 M8.1 1.9 L1.9 8.1" stroke="#fff" stroke-width="1.3" stroke-linecap="round"/></svg>
<svg class="a" style="left:1381px;top:78px" width="11" height="6" viewBox="0 0 11 6"><rect x="0.6" y="0.6" width="9.2" height="4" fill="#fff" stroke="#5a5a5a" stroke-width="1.1" rx="1"/></svg>
<svg class="a" style="left:1403px;top:78px" width="11" height="11" viewBox="0 0 11 11"><rect x="0.6" y="0.6" width="9.4" height="9.4" fill="#fff" stroke="#5a5a5a" stroke-width="1.1" rx="0.6"/><rect x="1.1" y="1.1" width="8.4" height="1.6" fill="#9a9a9a"/></svg>
<div class="a" style="left:446px;top:97px;width:11px;height:649px;background:#f8f8f8"></div>
<div class="a" style="left:479px;top:97px;width:1px;height:649px;background:#f4f4f4"></div>
<div class="a" style="left:1398px;top:98px;width:15px;height:663px;background:#f0f0f0"></div>
<div class="a" style="left:1413px;top:98px;width:12px;height:663px;background:#f8f8f8"></div>
<svg class="a" style="left:1401px;top:103px" width="8" height="6" viewBox="0 0 8 6"><path d="M0.8 5 L4 1.5 L7.2 5" fill="none" stroke="#acacac" stroke-width="1.5"/></svg>
<svg class="a" style="left:1401px;top:734px" width="8" height="6" viewBox="0 0 8 6"><path d="M0.8 1 L4 4.5 L7.2 1" fill="none" stroke="#acacac" stroke-width="1.5"/></svg>
<div class="a" style="left:446px;top:746px;width:34px;height:15px;background:#f8f8f8"></div>
<div class="a" style="left:480px;top:746px;width:918px;height:15px;background:#f0f0f0"></div>
<svg class="a" style="left:484px;top:750px" width="7" height="8" viewBox="0 0 7 8"><path d="M5.5 0.8 L1.5 4 L5.5 7.2" fill="none" stroke="#acacac" stroke-width="1.5"/></svg>
<svg class="a" style="left:1386px;top:750px" width="7" height="8" viewBox="0 0 7 8"><path d="M1.5 0.8 L5.5 4 L1.5 7.2" fill="none" stroke="#acacac" stroke-width="1.5"/></svg>
<div class="a" style="left:482px;top:411px;width:915px;height:14px;background:#e8f2fe"></div>
<svg class="a" style="left:446px;top:411px" width="11" height="14" viewBox="0 0 11 14"><defs><pattern id="ck" width="2" height="2" patternUnits="userSpaceOnUse"><rect width="2" height="2" fill="#90bff0"/><rect width="1" height="1" fill="#2f80dc"/><rect x="1" y="1" width="1" height="1" fill="#2f80dc"/></pattern></defs><rect width="11" height="14" fill="url(#ck)"/><rect width="11" height="1" fill="#1a60c8"/><rect y="13" width="11" height="1" fill="#1a60c8"/></svg>
<div class="m" style="left:430px;top:101px;width:41px;text-align:right;font-size:11.07px;color:#787878">1</div>
<div class="m" style="left:481.5px;top:101px;font-size:11.07px;color:#000"><span style="color:#7f0055;font-weight:bold">package</span> org.usfirst.frc.team3539.robot;</div>
<div class="m" style="left:430px;top:115px;width:41px;text-align:right;font-size:11.07px;color:#787878">2</div>
<div class="m" style="left:430px;top:129px;width:41px;text-align:right;font-size:11.07px;color:#787878">3</div>
<div class="m" style="left:481.5px;top:129px;font-size:11.07px;color:#000"><span style="color:#3f5fbf">/**</span></div>
<div class="m" style="left:430px;top:144px;width:41px;text-align:right;font-size:11.07px;color:#787878">4</div>
<div class="m" style="left:481.5px;top:144px;font-size:11.07px;color:#000"><span style="color:#3f5fbf"> * The RobotMap is a mapping from the ports sensors and actuators are wired into</span></div>
<div class="m" style="left:430px;top:158px;width:41px;text-align:right;font-size:11.07px;color:#787878">5</div>
<div class="m" style="left:481.5px;top:158px;font-size:11.07px;color:#000"><span style="color:#3f5fbf"> * to a variable name. This provides flexibility changing wiring, makes checking</span></div>
<div class="m" style="left:430px;top:172px;width:41px;text-align:right;font-size:11.07px;color:#787878">6</div>
<div class="m" style="left:481.5px;top:172px;font-size:11.07px;color:#000"><span style="color:#3f5fbf"> * the wiring easier and significantly reduces the number of magic numbers</span></div>
<div class="m" style="left:430px;top:186px;width:41px;text-align:right;font-size:11.07px;color:#787878">7</div>
<div class="m" style="left:481.5px;top:186px;font-size:11.07px;color:#000"><span style="color:#3f5fbf"> * floating around.</span></div>
<div class="m" style="left:430px;top:201px;width:41px;text-align:right;font-size:11.07px;color:#787878">8</div>
<div class="m" style="left:481.5px;top:201px;font-size:11.07px;color:#000"><span style="color:#3f5fbf"> */</span></div>
<div class="m" style="left:430px;top:215px;width:41px;text-align:right;font-size:11.07px;color:#787878">9</div>
<div class="m" style="left:481.5px;top:215px;font-size:11.07px;color:#000"><span style="color:#7f0055;font-weight:bold">public</span> <span style="color:#7f0055;font-weight:bold">class</span> RobotMap {</div>
<div class="m" style="left:430px;top:229px;width:41px;text-align:right;font-size:11.07px;color:#787878">10</div>
<div class="m" style="left:481.5px;top:229px;font-size:11.07px;color:#000">    <span style="color:#3f7f5f">// For example to map the left and right motors, you could define the</span></div>
<div class="m" style="left:430px;top:243px;width:41px;text-align:right;font-size:11.07px;color:#787878">11</div>
<div class="m" style="left:481.5px;top:243px;font-size:11.07px;color:#000">    <span style="color:#3f7f5f">// following variables to use with your drivetrain subsystem.</span></div>
<div class="m" style="left:430px;top:257px;width:41px;text-align:right;font-size:11.07px;color:#787878">12</div>
<div class="m" style="left:481.5px;top:257px;font-size:11.07px;color:#000">    <span style="color:#3f7f5f">// public static int leftMotor = 1;</span></div>
<div class="m" style="left:430px;top:272px;width:41px;text-align:right;font-size:11.07px;color:#787878">13</div>
<div class="m" style="left:481.5px;top:272px;font-size:11.07px;color:#000">    <span style="color:#3f7f5f">// public static int rightMotor = 2;</span></div>
<div class="m" style="left:430px;top:286px;width:41px;text-align:right;font-size:11.07px;color:#787878">14</div>
<div class="m" style="left:430px;top:300px;width:41px;text-align:right;font-size:11.07px;color:#787878">15</div>
<div class="m" style="left:481.5px;top:300px;font-size:11.07px;color:#000">    <span style="color:#3f7f5f">// If you are using multiple modules, make sure to define both the port</span></div>
<div class="m" style="left:430px;top:314px;width:41px;text-align:right;font-size:11.07px;color:#787878">16</div>
<div class="m" style="left:481.5px;top:314px;font-size:11.07px;color:#000">    <span style="color:#3f7f5f">// number and the module. For example you with a rangefinder:</span></div>
<div class="m" style="left:430px;top:329px;width:41px;text-align:right;font-size:11.07px;color:#787878">17</div>
<div class="m" style="left:481.5px;top:329px;font-size:11.07px;color:#000">    <span style="color:#3f7f5f">// public static int rangefinderPort = 1;</span></div>
<div class="m" style="left:430px;top:343px;width:41px;text-align:right;font-size:11.07px;color:#787878">18</div>
<div class="m" style="left:481.5px;top:343px;font-size:11.07px;color:#000">    <span style="color:#3f7f5f">// public static int rangefinderModule = 1;</span></div>
<div class="m" style="left:430px;top:357px;width:41px;text-align:right;font-size:11.07px;color:#787878">19</div>
<div class="m" style="left:430px;top:371px;width:41px;text-align:right;font-size:11.07px;color:#787878">20</div>
<div class="m" style="left:481.5px;top:371px;font-size:11.07px;color:#000">    <span style="color:#7f0055;font-weight:bold">public</span> <span style="color:#7f0055;font-weight:bold">static</span> <span style="color:#7f0055;font-weight:bold">final</span> <span style="color:#7f0055;font-weight:bold">int</span> <span style="color:#0000c0;font-weight:bold;font-style:italic">RFTalon</span> = 0;</div>
<div class="m" style="left:430px;top:385px;width:41px;text-align:right;font-size:11.07px;color:#787878">21</div>
<div class="m" style="left:481.5px;top:385px;font-size:11.07px;color:#000">    <span style="color:#7f0055;font-weight:bold">public</span> <span style="color:#7f0055;font-weight:bold">static</span> <span style="color:#7f0055;font-weight:bold">final</span> <span style="color:#7f0055;font-weight:bold">int</span> <span style="color:#0000c0;font-weight:bold;font-style:italic">LFTalon</span> = 1;</div>
<div class="m" style="left:430px;top:400px;width:41px;text-align:right;font-size:11.07px;color:#787878">22</div>
<div class="m" style="left:481.5px;top:400px;font-size:11.07px;color:#000">    <span style="color:#7f0055;font-weight:bold">public</span> <span style="color:#7f0055;font-weight:bold">static</span> <span style="color:#7f0055;font-weight:bold">final</span> <span style="color:#7f0055;font-weight:bold">int</span> <span style="color:#0000c0;font-weight:bold;font-style:italic">RBTalon</span> = 2;</div>
<div class="m" style="left:430px;top:414px;width:41px;text-align:right;font-size:11.07px;color:#787878">23</div>
<div class="m" style="left:481.5px;top:414px;font-size:11.07px;color:#000">    <span style="color:#7f0055;font-weight:bold">public</span> <span style="color:#7f0055;font-weight:bold">static</span> <span style="color:#7f0055;font-weight:bold">final</span> <span style="color:#7f0055;font-weight:bold">int</span> <span style="color:#0000c0;font-weight:bold;font-style:italic">LBTalon</span> = 3;</div>
<div class="m" style="left:430px;top:428px;width:41px;text-align:right;font-size:11.07px;color:#787878">24</div>
<div class="m" style="left:481.5px;top:428px;font-size:11.07px;color:#000">}</div>
<div class="m" style="left:430px;top:442px;width:41px;text-align:right;font-size:11.07px;color:#787878">25</div>
<svg class="a" style="left:471px;top:129px" width="9" height="9" viewBox="0 0 9 9"><circle cx="4.5" cy="4.5" r="3.9" fill="#dbe8f4" stroke="#a8b4c0" stroke-width="0.9"/><path d="M2.3 4.5 H6.7" stroke="#6a7888" stroke-width="1.1"/></svg>
<div class="a" style="left:1432px;top:71px;width:328px;height:345px;background:#fff;border:1px solid #ffffff;border-radius:6px;overflow:hidden"><div class="a" style="left:0;top:0;width:326px;height:23px;background:#f3f5fa;border-bottom:1px solid #f3f5fa"></div><div class="a" style="left:0;top:0;width:90px;height:23px;background:linear-gradient(#dfe6ef,#fbfcfd);border-top-right-radius:6px"></div></div>
<svg class="a" style="left:1439px;top:77px" width="11" height="15" viewBox="0 0 11 15"><path d="M0.8 0.8 H10.2 V14 L8 12.5 H2.8 L0.8 14Z" fill="#c8c8d0" stroke="#6a6a78" stroke-width="1"/><path d="M2.5 4 H8.5 M2.5 6.5 H8.5 M2.5 9 H8.5" stroke="#888" stroke-width="0.8"/></svg>
<div class="t" style="left:1455px;top:79.00px;font-size:11px;color:#222;letter-spacing:0.014px;">Task List</div>
<svg class="a" style="left:1505px;top:79px" width="10" height="10" viewBox="0 0 10 10"><path d="M1.9 1.9 L8.1 8.1 M8.1 1.9 L1.9 8.1" stroke="#555" stroke-width="3" stroke-linecap="round"/><path d="M1.9 1.9 L8.1 8.1 M8.1 1.9 L1.9 8.1" stroke="#fff" stroke-width="1.3" stroke-linecap="round"/></svg>
<svg class="a" style="left:1714px;top:78px" width="11" height="6" viewBox="0 0 11 6"><rect x="0.6" y="0.6" width="9.2" height="4" fill="#fff" stroke="#5a5a5a" stroke-width="1.1" rx="1"/></svg>
<svg class="a" style="left:1735px;top:78px" width="11" height="11" viewBox="0 0 11 11"><rect x="0.6" y="0.6" width="9.4" height="9.4" fill="#fff" stroke="#5a5a5a" stroke-width="1.1" rx="0.6"/><rect x="1.1" y="1.1" width="8.4" height="1.6" fill="#9a9a9a"/></svg>
<svg class="a" style="left:1515px;top:100px" width="14" height="15" viewBox="0 0 14 15"><path d="M1 4 L4 1.5 H10 V14 H1Z" fill="#e8ecf4" stroke="#8a98b0" stroke-width="1"/><path d="M10 0.5 L11 3 L13.5 4 L11 5 L10 7.5 L9 5 L6.5 4 L9 3Z" fill="#f8e08a" stroke="#c09030" stroke-width="0.7"/></svg>
<svg class="a" style="left:1534px;top:106px" width="8" height="5" viewBox="0 0 8 5"><path d="M0 0 H8 L4 4.5Z" fill="#111"/></svg>
<div class="a" style="left:1547px;top:99px;width:1px;height:17px;background:#8a8a8a"></div>
<div class="a" style="left:1552px;top:98px;width:22px;height:20px;background:#c8e2f8;border:1px solid #92c6f4"></div>
<svg class="a" style="left:1556px;top:100px" width="15" height="15" viewBox="0 0 15 15"><rect x="0.5" y="1" width="7" height="4" fill="#b0b8c8" stroke="#5a7ab0" stroke-width="0.8"/><path d="M4 5 V14 M4 9 H7 M4 13 H7 M8 3 H14 M9 9 H14 M9 13 H14" stroke="#3a68a8" stroke-width="1"/></svg>
<svg class="a" style="left:1577px;top:100px" width="15" height="15" viewBox="0 0 15 15"><circle cx="4" cy="4" r="3.2" fill="#fff" stroke="#3a68a8" stroke-width="1"/><path d="M4 2.5 V4 H5.5" stroke="#3a68a8" stroke-width="0.8" fill="none"/><path d="M4 7 V14 M4 9.5 H7 M4 13 H7 M8 4 H14 M9 9.5 H14 M9 13 H14" stroke="#3a68a8" stroke-width="1"/></svg>
<div class="a" style="left:1598px;top:99px;width:1px;height:17px;background:#8a8a8a"></div>
<svg class="a" style="left:1608px;top:102px" width="13" height="13" viewBox="0 0 13 13"><circle cx="3.5" cy="3.5" r="3" fill="#d2d2d2"/><circle cx="9" cy="5.5" r="3" fill="#c4c4c4"/><circle cx="4.8" cy="9" r="3.3" fill="#8878b8"/></svg>
<div class="a" style="left:1627px;top:99px;width:1px;height:17px;background:#8a8a8a"></div>
<svg class="a" style="left:1636px;top:101px" width="15" height="15" viewBox="0 0 15 15"><path d="M1 1 L14 14.5" stroke="#2a4aa0" stroke-width="1.4"/><path d="M3 8.5 L6 12 L12 5" fill="none" stroke="#5a7088" stroke-width="1.3"/></svg>
<svg class="a" style="left:1657px;top:101px" width="17" height="14" viewBox="0 0 17 14"><circle cx="4" cy="2" r="1.8" fill="#e8a020"/><path d="M2 4 H6 V9 H5 V14 H3 V9 H2Z" fill="#e8a020" stroke="#b06010" stroke-width="0.6"/><circle cx="11" cy="2" r="1.8" fill="#8090a0"/><path d="M9 4 H13 V9 H12 V14 H10 V9 H9Z" fill="#8a98a8"/><path d="M6 0.5 L16.5 12" stroke="#2a4aa0" stroke-width="1.3"/></svg>
<svg class="a" style="left:1681px;top:102px" width="13" height="13" viewBox="0 0 13 13"><rect x="0.5" y="0.5" width="9" height="9" fill="#dfe8f0" stroke="#8ca0b8"/><rect x="2.5" y="2.5" width="10" height="10" fill="#e8f2f8" stroke="#7890b0"/><path d="M5 7.5 H10.5" stroke="#2060a8" stroke-width="1.6"/></svg>
<div class="a" style="left:1700px;top:99px;width:1px;height:17px;background:#8a8a8a"></div>
<svg class="a" style="left:1709px;top:101px" width="15" height="14" viewBox="0 0 15 14"><rect x="7" y="1" width="7.5" height="12.5" rx="3" fill="#3a78c8" stroke="#2a5aa0" stroke-width="0.8"/><path d="M1 5 Q4 1 7 3 M6 9 Q4 13 1 11" fill="none" stroke="#e8b030" stroke-width="2.2"/></svg>
<svg class="a" style="left:1739px;top:103px" width="11" height="7" viewBox="0 0 11 7"><path d="M1 1 H10 L5.5 6Z" fill="none" stroke="#666" stroke-width="1.2"/></svg>
<div class="a" style="left:1438px;top:123px;width:115px;height:19px;background:#fff;border:1px solid #a8a8a8"></div>
<div class="t" style="left:1448px;top:128.00px;font-size:11px;color:#666;">Find</div>
<svg class="a" style="left:1538px;top:126px" width="11" height="12" viewBox="0 0 11 12"><circle cx="4.5" cy="4.5" r="3.6" fill="#f4f8fc" stroke="#666" stroke-width="1.1"/><path d="M7 7 L10.5 11" stroke="#444" stroke-width="1.8"/></svg>
<svg class="a" style="left:1566px;top:128px" width="6" height="9" viewBox="0 0 6 9"><path d="M0.5 0.5 L5.5 4.5 L0.5 8.5Z" fill="#222"/></svg>
<div class="t" style="left:1580px;top:128.00px;font-size:11px;color:#2a5ab8;letter-spacing:0.837px;">All</div>
<svg class="a" style="left:1604px;top:128px" width="6" height="9" viewBox="0 0 6 9"><path d="M0.5 0.5 L5.5 4.5 L0.5 8.5Z" fill="#222"/></svg>
<div class="t" style="left:1618px;top:128.00px;font-size:11px;color:#2a5ab8;letter-spacing:0.130px;">Activate...</div>
<svg class="a" style="left:1742px;top:125px" width="14" height="14" viewBox="0 0 14 14"><circle cx="7" cy="7" r="6.2" fill="#fff" stroke="#2a6ab0" stroke-width="1.2"/><path d="M4.8 5.2 Q4.8 3 7 3 Q9.2 3 9.2 5 Q9.2 6.5 7 7.3 V8.7" fill="none" stroke="#2a6ab0" stroke-width="1.4"/><circle cx="7" cy="10.6" r="0.9" fill="#2a6ab0"/></svg>
<div class="a" style="left:1432px;top:420px;width:328px;height:344px;background:#fff;border:1px solid #ffffff;border-radius:6px;overflow:hidden"><div class="a" style="left:0;top:0;width:326px;height:23px;background:#f3f5fa;border-bottom:1px solid #f3f5fa"></div><div class="a" style="left:0;top:0;width:85px;height:23px;background:linear-gradient(#dfe6ef,#fbfcfd);border-top-right-radius:6px"></div></div>
<svg class="a" style="left:1437px;top:426px" width="13" height="15" viewBox="0 0 13 15"><rect x="0.5" y="0.5" width="4" height="4" fill="#fff" stroke="#2a78c8" stroke-width="1.1"/><rect x="0.5" y="9.5" width="4" height="4" fill="#fff" stroke="#2a78c8" stroke-width="1.1"/><path d="M6 2.5 H12 M8 7 H12 M6 11.5 H12" stroke="#2a78c8" stroke-width="1.1"/><rect x="6.5" y="5.5" width="2.5" height="2.5" fill="#2a78c8"/></svg>
<div class="t" style="left:1455px;top:428.00px;font-size:11px;color:#222;letter-spacing:0.558px;">Outline</div>
<svg class="a" style="left:1500px;top:428px" width="10" height="10" viewBox="0 0 10 10"><path d="M1.9 1.9 L8.1 8.1 M8.1 1.9 L1.9 8.1" stroke="#555" stroke-width="3" stroke-linecap="round"/><path d="M1.9 1.9 L8.1 8.1 M8.1 1.9 L1.9 8.1" stroke="#fff" stroke-width="1.3" stroke-linecap="round"/></svg>
<svg class="a" style="left:1536px;top:427px" width="13" height="13" viewBox="0 0 13 13"><circle cx="3.5" cy="3.5" r="3" fill="#d2d2d2"/><circle cx="9" cy="5.5" r="3" fill="#c4c4c4"/><circle cx="4.8" cy="9" r="3.3" fill="#a8a8a8"/></svg>
<svg class="a" style="left:1557px;top:427px" width="13" height="13" viewBox="0 0 13 13"><rect x="0.5" y="0.5" width="9" height="9" fill="#dfe8f0" stroke="#8ca0b8"/><rect x="2.5" y="2.5" width="10" height="10" fill="#e8f2f8" stroke="#7890b0"/><path d="M5 7.5 H10.5" stroke="#2060a8" stroke-width="1.6"/></svg>
<svg class="a" style="left:1578px;top:425px" width="16" height="16" viewBox="0 0 16 16"><path d="M2.5 1 V14 M0.5 11.5 L2.5 14 L4.5 11.5" fill="none" stroke="#2a5a90" stroke-width="1.2"/><text x="6" y="7" font-family="Liberation Sans" font-weight="bold" font-size="8" fill="#2a7a8a">a</text><text x="8" y="15" font-family="Liberation Sans" font-weight="bold" font-size="8" fill="#a040a0">z</text></svg>
<svg class="a" style="left:1600px;top:425px" width="15" height="15" viewBox="0 0 15 15"><circle cx="7" cy="8" r="5.3" fill="#6aa8e8" stroke="#2a68b8" stroke-width="0.8"/><path d="M1 1 L14 14.5" stroke="#1a3a90" stroke-width="1.5"/></svg>
<svg class="a" style="left:1623px;top:425px" width="14" height="15" viewBox="0 0 14 15"><circle cx="5.5" cy="9" r="4" fill="#8898a8"/><path d="M1 4 L11 14.5" stroke="#1a3a90" stroke-width="1.5"/><text x="8" y="6" font-family="Liberation Sans" font-size="6.5" fill="#2a5ab0">S</text></svg>
<svg class="a" style="left:1646px;top:428px" width="10" height="10" viewBox="0 0 10 10"><circle cx="5" cy="5" r="4.3" fill="#3aa040"/><path d="M2.5 5 H7.5" stroke="#a8e0a8" stroke-width="1"/></svg>
<svg class="a" style="left:1666px;top:425px" width="15" height="15" viewBox="0 0 15 15"><circle cx="5.5" cy="9" r="4" fill="#8898a8"/><path d="M1 4 L11 14.5" stroke="#1a3a90" stroke-width="1.5"/><text x="9" y="6" font-family="Liberation Sans" font-size="6.5" fill="#2a5ab0">L</text></svg>
<svg class="a" style="left:1695px;top:428px" width="11" height="7" viewBox="0 0 11 7"><path d="M1 1 H10 L5.5 6Z" fill="none" stroke="#666" stroke-width="1.2"/></svg>
<svg class="a" style="left:1714px;top:428px" width="11" height="6" viewBox="0 0 11 6"><rect x="0.6" y="0.6" width="9.2" height="4" fill="#fff" stroke="#5a5a5a" stroke-width="1.1" rx="1"/></svg>
<svg class="a" style="left:1735px;top:428px" width="11" height="11" viewBox="0 0 11 11"><rect x="0.6" y="0.6" width="9.4" height="9.4" fill="#fff" stroke="#5a5a5a" stroke-width="1.1" rx="0.6"/><rect x="1.1" y="1.1" width="8.4" height="1.6" fill="#9a9a9a"/></svg>
<svg class="a" style="left:1464px;top:450px" width="13" height="13" viewBox="0 0 13 13"><rect x="1.5" y="1.5" width="10" height="10" fill="#e8e8c8" stroke="#8a8a5a" stroke-width="1.1"/><path d="M0.5 6.5 H12.5 M6.5 0 V13" stroke="#8a8a5a" stroke-width="1.4" fill="none"/></svg>
<div class="t" style="left:1487.4px;top:450.00px;font-size:11px;color:#111;letter-spacing:0.128px;">org.usfirst.frc.team3539.robot</div>
<svg class="a" style="left:1443px;top:469px" width="10" height="7" viewBox="0 0 10 7"><path d="M1 1.2 L5 5.2 L9 1.2" fill="none" stroke="#404040" stroke-width="1.5"/></svg>
<svg class="a" style="left:1462px;top:464px" width="13" height="13" viewBox="0 0 13 13"><circle cx="6.5" cy="6.5" r="6" fill="#3aa04a" stroke="#1b6b2a" stroke-width="0.6"/><path d="M8.8 4.6 A3 3 0 1 0 8.8 8.4" fill="none" stroke="#fff" stroke-width="1.7"/></svg>
<div class="t" style="left:1487.4px;top:467.00px;font-size:11px;color:#111;letter-spacing:0.321px;">RobotMap</div>
<svg class="a" style="left:1489px;top:480.8px" width="17" height="12" viewBox="0 0 17 12"><circle cx="3.2" cy="8.4" r="2" fill="#fff" stroke="#2a9040" stroke-width="1.7"/><path d="M4.6 6.8 L6 5.6" stroke="#2a9040" stroke-width="1.2"/><text x="5.2" y="6.2" font-family="Liberation Sans" font-weight="bold" font-size="8" fill="#d83060">S</text><text x="11.6" y="5.8" font-family="Liberation Sans" font-weight="bold" font-size="7" fill="#2a68a8">F</text></svg>
<div class="t" style="left:1510.8px;top:484px;font-size:11px;color:#111;letter-spacing:0.029px">RFTalon<span style="color:#957d47"> : int</span></div>
<svg class="a" style="left:1489px;top:497.8px" width="17" height="12" viewBox="0 0 17 12"><circle cx="3.2" cy="8.4" r="2" fill="#fff" stroke="#2a9040" stroke-width="1.7"/><path d="M4.6 6.8 L6 5.6" stroke="#2a9040" stroke-width="1.2"/><text x="5.2" y="6.2" font-family="Liberation Sans" font-weight="bold" font-size="8" fill="#d83060">S</text><text x="11.6" y="5.8" font-family="Liberation Sans" font-weight="bold" font-size="7" fill="#2a68a8">F</text></svg>
<div class="t" style="left:1510.8px;top:501px;font-size:11px;color:#111;letter-spacing:0.182px">LFTalon<span style="color:#957d47"> : int</span></div>
<svg class="a" style="left:1489px;top:514.8px" width="17" height="12" viewBox="0 0 17 12"><circle cx="3.2" cy="8.4" r="2" fill="#fff" stroke="#2a9040" stroke-width="1.7"/><path d="M4.6 6.8 L6 5.6" stroke="#2a9040" stroke-width="1.2"/><text x="5.2" y="6.2" font-family="Liberation Sans" font-weight="bold" font-size="8" fill="#d83060">S</text><text x="11.6" y="5.8" font-family="Liberation Sans" font-weight="bold" font-size="7" fill="#2a68a8">F</text></svg>
<div class="t" style="left:1510.8px;top:518px;font-size:11px;color:#111;letter-spacing:-0.022px">RBTalon<span style="color:#957d47"> : int</span></div>
<div class="a" style="left:1483px;top:532px;width:90px;height:16px;background:#d9d9d9"></div>
<svg class="a" style="left:1489px;top:531.8px" width="17" height="12" viewBox="0 0 17 12"><circle cx="3.2" cy="8.4" r="2" fill="#fff" stroke="#2a9040" stroke-width="1.7"/><path d="M4.6 6.8 L6 5.6" stroke="#2a9040" stroke-width="1.2"/><text x="5.2" y="6.2" font-family="Liberation Sans" font-weight="bold" font-size="8" fill="#d83060">S</text><text x="11.6" y="5.8" font-family="Liberation Sans" font-weight="bold" font-size="7" fill="#2a68a8">F</text></svg>
<div class="t" style="left:1510.8px;top:535px;font-size:11px;color:#111;letter-spacing:0.130px">LBTalon<span style="color:#111"> : int</span></div>
<div class="a" style="left:443px;top:768px;width:657px;height:230px;background:#fff;border:1px solid #ffffff;border-radius:6px;overflow:hidden"><div class="a" style="left:0;top:0;width:655px;height:23px;background:#f3f5fa;border-bottom:1px solid #f3f5fa"></div><div class="a" style="left:0;top:0;width:95px;height:23px;background:linear-gradient(#dfe6ef,#fbfcfd);border-top-right-radius:6px"></div></div>
<svg class="a" style="left:446px;top:773px" width="15" height="16" viewBox="0 0 15 16"><rect x="0.5" y="0.5" width="11" height="14" fill="#fff" stroke="#9aa8b8" stroke-width="0.9"/><circle cx="5" cy="5" r="3" fill="#e02828"/><path d="M1 15 L4 9 L7 15Z" fill="#f0c040" stroke="#b08010" stroke-width="0.6"/><path d="M8 6 H11 M8 9 H11 M8 12 H11" stroke="#8aa0c0" stroke-width="0.8"/></svg>
<div class="t" style="left:466.2px;top:776.00px;font-size:11px;color:#222;letter-spacing:0.177px;">Problems</div>
<svg class="a" style="left:521px;top:776px" width="10" height="10" viewBox="0 0 10 10"><path d="M1.9 1.9 L8.1 8.1 M8.1 1.9 L1.9 8.1" stroke="#555" stroke-width="3" stroke-linecap="round"/><path d="M1.9 1.9 L8.1 8.1 M8.1 1.9 L1.9 8.1" stroke="#fff" stroke-width="1.3" stroke-linecap="round"/></svg>
<div class="t" style="left:545px;top:777.00px;font-size:10px;color:#9ab0d0;">@</div>
<div class="t" style="left:560.7px;top:776.00px;font-size:11px;color:#8a8a8a;letter-spacing:-0.062px;">Javadoc</div>
<svg class="a" style="left:610px;top:773px" width="14" height="16" viewBox="0 0 14 16"><rect x="0.5" y="0.5" width="10" height="13" fill="#fff" stroke="#b8c0cc" stroke-width="0.9"/><path d="M3 4 H8 M3 6.5 H8" stroke="#a0b0c8" stroke-width="0.8"/><path d="M6 9 H11 V7 L13.5 10.5 L11 14 V12 H6Z" fill="#f8f0d0" stroke="#c8a860" stroke-width="0.8"/></svg>
<div class="t" style="left:628.5px;top:776.00px;font-size:11px;color:#8a8a8a;letter-spacing:0.116px;">Declaration</div>
<svg class="a" style="left:976px;top:774px" width="16" height="14" viewBox="0 0 16 14"><path d="M0 3 H9 M0 7 H9 M0 11 H9" stroke="#333" stroke-width="1"/><path d="M7 4 H11 V1.5 L15 6.5 L11 11.5 V9 H7Z" fill="#f8d870" stroke="#d09020" stroke-width="0.9"/></svg>
<div class="a" style="left:997px;top:773px;width:1px;height:17px;background:#8a8a8a"></div>
<svg class="a" style="left:1007px;top:774px" width="13" height="13" viewBox="0 0 13 13"><circle cx="3.5" cy="3.5" r="3" fill="#d2d2d2"/><circle cx="9" cy="5.5" r="3" fill="#c4c4c4"/><circle cx="4.8" cy="9" r="3.3" fill="#a8a8a8"/></svg>
<svg class="a" style="left:1036px;top:776px" width="11" height="7" viewBox="0 0 11 7"><path d="M1 1 H10 L5.5 6Z" fill="none" stroke="#666" stroke-width="1.2"/></svg>
<svg class="a" style="left:1054px;top:776px" width="11" height="6" viewBox="0 0 11 6"><rect x="0.6" y="0.6" width="9.2" height="4" fill="#fff" stroke="#5a5a5a" stroke-width="1.1" rx="1"/></svg>
<svg class="a" style="left:1076px;top:775px" width="11" height="11" viewBox="0 0 11 11"><rect x="0.6" y="0.6" width="9.4" height="9.4" fill="#fff" stroke="#5a5a5a" stroke-width="1.1" rx="0.6"/><rect x="1.1" y="1.1" width="8.4" height="1.6" fill="#9a9a9a"/></svg>
<div class="t" style="left:445.6px;top:797.00px;font-size:11px;color:#111;letter-spacing:0.008px;">0 errors, 2 warnings, 0 others</div>
<div class="a" style="left:446px;top:809px;width:651px;height:1px;background:#9a9a9a"></div>
<div class="a" style="left:446px;top:833px;width:283px;height:147px;background:#f7f7f7"></div>
<svg class="a" style="left:584px;top:810px" width="10" height="6" viewBox="0 0 10 6"><path d="M1 5 L5 1.2 L9 5" fill="none" stroke="#555" stroke-width="1"/></svg>
<div class="t" style="left:451.2px;top:817.00px;font-size:11px;color:#111;letter-spacing:0.288px;">Description</div>
<div class="t" style="left:736px;top:817.00px;font-size:11px;color:#111;letter-spacing:-0.168px;">Resource</div>
<div class="t" style="left:821px;top:817.00px;font-size:11px;color:#111;letter-spacing:0.324px;">Path</div>
<div class="t" style="left:934.8px;top:817.00px;font-size:11px;color:#111;letter-spacing:0.444px;">Location</div>
<div class="t" style="left:1021px;top:817.00px;font-size:11px;color:#111;letter-spacing:0.084px;">Type</div>
<div class="a" style="left:729px;top:812px;width:1px;height:168px;background:#e8e8e8"></div>
<div class="a" style="left:815px;top:812px;width:1px;height:168px;background:#e8e8e8"></div>
<div class="a" style="left:928px;top:812px;width:1px;height:168px;background:#e8e8e8"></div>
<div class="a" style="left:1014px;top:812px;width:1px;height:168px;background:#e8e8e8"></div>
<div class="a" style="left:446px;top:850px;width:651px;height:1px;background:#e6e6e6"></div>
<div class="a" style="left:446px;top:867px;width:651px;height:1px;background:#e6e6e6"></div>
<div class="a" style="left:446px;top:884px;width:651px;height:1px;background:#e6e6e6"></div>
<div class="a" style="left:446px;top:901px;width:651px;height:1px;background:#e6e6e6"></div>
<div class="a" style="left:446px;top:918px;width:651px;height:1px;background:#e6e6e6"></div>
<div class="a" style="left:446px;top:935px;width:651px;height:1px;background:#e6e6e6"></div>
<div class="a" style="left:446px;top:952px;width:651px;height:1px;background:#e6e6e6"></div>
<div class="a" style="left:446px;top:969px;width:651px;height:1px;background:#e6e6e6"></div>
<svg class="a" style="left:453px;top:838px" width="7" height="10" viewBox="0 0 7 10"><path d="M1.2 1 L5.2 5 L1.2 9" fill="none" stroke="#8a8a8a" stroke-width="1.4"/></svg>
<svg class="a" style="left:468px;top:835px" width="12" height="12" viewBox="0 0 12 12"><path d="M6 0.8 L11.4 11 H0.6Z" fill="#f8c850" stroke="#d08a10" stroke-width="1" stroke-linejoin="round"/><path d="M6 4 V7.5 M6 8.8 V10" stroke="#6a4000" stroke-width="1.2"/></svg>
<div class="t" style="left:486px;top:837.00px;font-size:11px;color:#111;letter-spacing:0.165px;">Warnings (2 items)</div>
<div class="a" style="left:446px;top:981px;width:651px;height:15px;background:#f0f0f0"></div>
<div class="a" style="left:462px;top:982px;width:615px;height:13px;background:#cdcdcd"></div>
<svg class="a" style="left:449px;top:984px" width="8" height="9" viewBox="0 0 8 9"><path d="M6 0.8 L1.8 4.5 L6 8.2" fill="none" stroke="#555" stroke-width="1.6"/></svg>
<svg class="a" style="left:1085px;top:984px" width="8" height="9" viewBox="0 0 8 9"><path d="M1.8 0.8 L6 4.5 L1.8 8.2" fill="none" stroke="#555" stroke-width="1.6"/></svg>
<div class="a" style="left:1104px;top:768px;width:656px;height:230px;background:#fff;border:1px solid #ffffff;border-radius:6px;overflow:hidden"><div class="a" style="left:0;top:0;width:654px;height:23px;background:#f3f5fa;border-bottom:1px solid #f3f5fa"></div><div class="a" style="left:0;top:0;width:80px;height:23px;background:linear-gradient(#dfe6ef,#fbfcfd);border-top-right-radius:6px"></div></div>
<svg class="a" style="left:1109px;top:774px" width="14" height="14" viewBox="0 0 14 14"><path d="M1.5 13.5 V1.5 H8.5 Q12 1.5 12 5 Q12 8 8.5 8 H3 M7 8 L12.5 13.5" fill="none" stroke="#20a040" stroke-width="3.2"/><path d="M1.5 13.5 V1.5 H8.5 Q12 1.5 12 5 Q12 8 8.5 8 H3 M7 8 L12.5 13.5" fill="none" stroke="#111" stroke-width="1.6"/></svg>
<div class="t" style="left:1127.3px;top:776.00px;font-size:11px;color:#222;letter-spacing:0.363px;">Riolog</div>
<svg class="a" style="left:1167px;top:776px" width="10" height="10" viewBox="0 0 10 10"><path d="M1.9 1.9 L8.1 8.1 M8.1 1.9 L1.9 8.1" stroke="#555" stroke-width="3" stroke-linecap="round"/><path d="M1.9 1.9 L8.1 8.1 M8.1 1.9 L1.9 8.1" stroke="#fff" stroke-width="1.3" stroke-linecap="round"/></svg>
<svg class="a" style="left:1565px;top:775px" width="12" height="12" viewBox="0 0 12 12"><rect x="0.8" y="0.8" width="10.4" height="10.4" rx="1.5" fill="#e02828" stroke="#a01010" stroke-width="0.8"/><rect x="3" y="3" width="6" height="6" fill="#f04848"/></svg>
<svg class="a" style="left:1585px;top:775px" width="16" height="12" viewBox="0 0 16 12"><path d="M1 4 H8 V1 L15 6 L8 11 V8 H1Z" fill="#fff" stroke="#aaa" stroke-width="1.1"/></svg>
<div class="a" style="left:1607px;top:773px;width:1px;height:17px;background:#8a8a8a"></div>
<svg class="a" style="left:1617px;top:774px" width="13" height="14" viewBox="0 0 13 14"><path d="M3 12 L10 1 L12.5 3 L6 12Z" fill="#f4e4c8" stroke="#b09070" stroke-width="0.9"/><path d="M1 13 H12" stroke="#999" stroke-width="1"/></svg>
<div class="a" style="left:1637px;top:773px;width:1px;height:17px;background:#8a8a8a"></div>
<svg class="a" style="left:1645px;top:774px" width="14" height="14" viewBox="0 0 14 14"><path d="M2 2 L12 12 M12 2 L2 12" stroke="#a01818" stroke-width="4" stroke-linecap="round"/><path d="M2 2 L12 12 M12 2 L2 12" stroke="#f03030" stroke-width="2.4" stroke-linecap="round"/></svg>
<svg class="a" style="left:1667px;top:774px" width="14" height="14" viewBox="0 0 14 14"><path d="M7 1 V13 M1 7 H13" stroke="#888" stroke-width="3.4"/><path d="M7 1 V13 M1 7 H13" stroke="#c8c8c8" stroke-width="1.4"/></svg>
<svg class="a" style="left:1696px;top:776px" width="11" height="7" viewBox="0 0 11 7"><path d="M1 1 H10 L5.5 6Z" fill="none" stroke="#666" stroke-width="1.2"/></svg>
<svg class="a" style="left:1715px;top:776px" width="11" height="6" viewBox="0 0 11 6"><rect x="0.6" y="0.6" width="9.2" height="4" fill="#fff" stroke="#5a5a5a" stroke-width="1.1" rx="1"/></svg>
<svg class="a" style="left:1737px;top:775px" width="11" height="11" viewBox="0 0 11 11"><rect x="0.6" y="0.6" width="9.4" height="9.4" fill="#fff" stroke="#5a5a5a" stroke-width="1.1" rx="0.6"/><rect x="1.1" y="1.1" width="8.4" height="1.6" fill="#9a9a9a"/></svg>
<div class="a" style="left:1111px;top:799px;width:642px;height:164px;background:#f0f0f0"></div>
<div class="a" style="left:1737px;top:799px;width:1px;height:149px;background:#fff"></div>
<div class="a" style="left:1111px;top:947px;width:627px;height:1px;background:#fff"></div>
<svg class="a" style="left:1741px;top:805px" width="9" height="6" viewBox="0 0 9 6"><path d="M0.8 5 L4.5 1.5 L8.2 5" fill="none" stroke="#a8a8a8" stroke-width="1.4"/></svg>
<svg class="a" style="left:1741px;top:936px" width="9" height="6" viewBox="0 0 9 6"><path d="M0.8 1 L4.5 4.5 L8.2 1" fill="none" stroke="#a8a8a8" stroke-width="1.4"/></svg>
<svg class="a" style="left:1114px;top:951px" width="6" height="9" viewBox="0 0 6 9"><path d="M5 0.8 L1.5 4.5 L5 8.2" fill="none" stroke="#a8a8a8" stroke-width="1.4"/></svg>
<svg class="a" style="left:1727px;top:951px" width="6" height="9" viewBox="0 0 6 9"><path d="M1 0.8 L4.5 4.5 L1 8.2" fill="none" stroke="#a8a8a8" stroke-width="1.4"/></svg>
<div class="a" style="left:1112px;top:969px;width:212px;height:22px;background:#e1e1e1;border:1px solid #adadad"></div>
<div class="t" style="left:1184.5px;top:975.00px;font-size:11px;color:#111;letter-spacing:-0.101px;">Pause Display</div>
<div class="a" style="left:1327px;top:969px;width:211px;height:22px;background:#e1e1e1;border:1px solid #adadad"></div>
<div class="t" style="left:1388.4px;top:975.00px;font-size:11px;color:#111;letter-spacing:0.235px;">Discard Incoming</div>
<div class="a" style="left:1541px;top:969px;width:211px;height:22px;background:#e1e1e1;border:1px solid #adadad"></div>
<div class="t" style="left:1622.8px;top:975.00px;font-size:11px;color:#111;letter-spacing:-0.037px;">Clear Log</div>
<div class="t" style="left:1093px;top:1005.00px;font-size:11px;color:#111;letter-spacing:0.222px;">Writable</div>
<div class="a" style="left:1183px;top:999px;width:1px;height:21px;background:#9a9a9a"></div>
<div class="t" style="left:1191px;top:1005.00px;font-size:11px;color:#111;letter-spacing:-0.000px;">Smart Insert</div>
<div class="a" style="left:1277px;top:999px;width:1px;height:21px;background:#9a9a9a"></div>
<div class="t" style="left:1283.6px;top:1005.00px;font-size:11px;color:#111;letter-spacing:-0.240px;">23 : 41</div>
<svg class="a" style="left:1367px;top:1001px" width="3" height="19" viewBox="0 0 3 19"><rect x="0.4" y="1.5" width="2" height="2" rx="0.5" fill="#a8a090"/><rect x="0.4" y="5.8" width="2" height="2" rx="0.5" fill="#a8a090"/><rect x="0.4" y="10.1" width="2" height="2" rx="0.5" fill="#a8a090"/><rect x="0.4" y="14.4" width="2" height="2" rx="0.5" fill="#a8a090"/></svg>
<div class="a" style="left:1085px;top:999px;width:1px;height:21px;background:#9a9a9a"></div>
<svg class="a" style="left:1639px;top:1003px" width="3" height="19" viewBox="0 0 3 19"><rect x="0.4" y="1.5" width="2" height="2" rx="0.5" fill="#a8a090"/><rect x="0.4" y="5.8" width="2" height="2" rx="0.5" fill="#a8a090"/><rect x="0.4" y="10.1" width="2" height="2" rx="0.5" fill="#a8a090"/><rect x="0.4" y="14.4" width="2" height="2" rx="0.5" fill="#a8a090"/></svg>
<div class="a" style="left:1643px;top:1000px;width:118px;height:24px;border-left:1px solid #8e8e8e;border-top:1px solid #8e8e8e"></div>
<svg class="a" style="left:1646px;top:1006px" width="16" height="12" viewBox="0 0 16 12"><path d="M1 5 Q4 1.5 8 3 H11 V10 H6 Z" fill="#fff" stroke="#777" stroke-width="0.9"/><rect x="7" y="4.5" width="8" height="7" rx="1" fill="#f0c850" stroke="#a88020" stroke-width="0.9"/></svg>
<div class="a" style="left:1667px;top:1003px;width:1px;height:17px;background:#555"></div>
<svg class="a" style="left:1676px;top:1006px" width="14" height="12" viewBox="0 0 14 12"><path d="M1 2 L4.5 1 L9 2 L13 1 V10.5 L9 11.5 L4.5 10.5 L1 11.5Z" fill="#fdf0dc" stroke="#f0a040" stroke-width="1.1"/><path d="M4.5 1 V10.5 M9 2 V11.5" stroke="#f0b060" stroke-width="1"/></svg>
<svg class="a" style="left:1698px;top:1005px" width="15" height="12" viewBox="0 0 15 12"><path d="M0.5 4.5 L7.5 1.5 L14.5 4.5 L7.5 7.5Z" fill="#f5a030"/><path d="M3.5 6 V9 Q7.5 11 11.5 9 V6 L7.5 8Z" fill="#f5a030"/><path d="M2 5 V10" stroke="#f5a030" stroke-width="1"/></svg>
<svg class="a" style="left:1720px;top:1005px" width="13" height="13" viewBox="0 0 13 13"><path d="M1.5 12 L10.5 3" stroke="#f59a28" stroke-width="2.6" stroke-linecap="round"/><circle cx="4" cy="2" r="0.7" fill="#f5a030"/><circle cx="11.5" cy="8" r="0.7" fill="#f5a030"/></svg>
<svg class="a" style="left:1742px;top:1005px" width="14" height="14" viewBox="0 0 14 14"><circle cx="7" cy="7" r="6" fill="none" stroke="#f5a030" stroke-width="1.4"/><path d="M7 3 L8.1 5.7 L11 5.8 L8.8 7.6 L9.5 10.4 L7 8.8 L4.5 10.4 L5.2 7.6 L3 5.8 L5.9 5.7Z" fill="none" stroke="#f5a030" stroke-width="1"/></svg>
</body></html>
